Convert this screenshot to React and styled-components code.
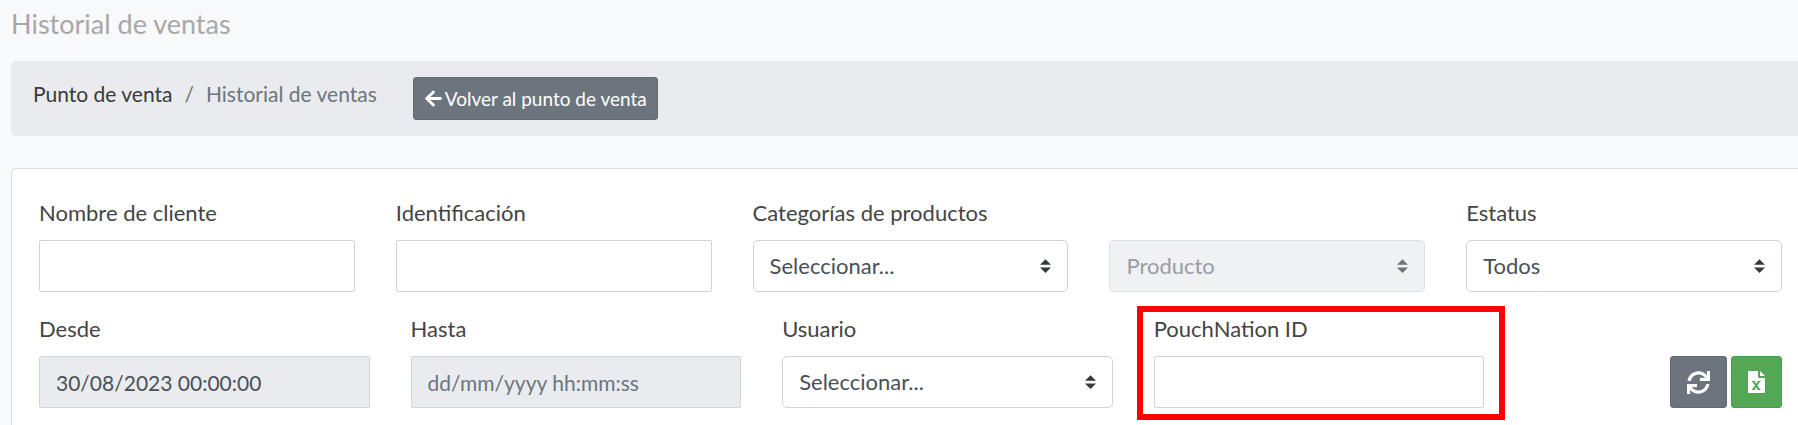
import React from 'react';
import styled, { createGlobalStyle, css } from 'styled-components';
import { FaArrowLeft } from 'react-icons/fa';

const GlobalStyle = createGlobalStyle`
  *, *::before, *::after { box-sizing: border-box; }
  body {
    margin: 0;
    background: #f8f9fb;
    color: #444;
    font-family: Lato, "Liberation Sans", sans-serif;
    font-size: 22px;
    line-height: 32px;
    overflow-x: hidden;
  }
`;

const Page = styled.main`
  padding: 8px 0 0 11px;
`;

const Title = styled.h1`
  margin: 0 0 21px;
  color: #a8a8a8;
  font-size: 27px;
  font-weight: 400;
  line-height: 32px;
`;

const Breadcrumb = styled.nav`
  display: flex;
  align-items: flex-start;
  gap: 36px;
  padding: 16px 22px;
  background: #eaebef;
  border-radius: 5px 0 0 5px;
`;

const Crumbs = styled.ol`
  display: flex;
  margin: 0;
  padding: 0;
  list-style: none;
  font-size: 21px;
  line-height: 34px;
`;

const Crumb = styled.li`
  color: #6c757d;

  & + &::before {
    content: "/";
    padding: 0 12px;
  }
`;

const CrumbLink = styled.a`
  color: #3a3a3a;
  text-decoration: none;
`;

const Button = styled.button`
  display: inline-flex;
  align-items: center;
  justify-content: center;
  gap: 2px;
  height: ${(p) => (p.$square ? '52px' : '43px')};
  padding: ${(p) => (p.$square ? '0 16px' : '0 10px')};
  border: 1px solid ${(p) => (p.$tone === 'success' ? '#4a9e4a' : '#636b73')};
  border-radius: 3px;
  background: ${(p) => (p.$tone === 'success' ? '#54a754' : '#6c757d')};
  color: #fff;
  font: inherit;
  font-size: 19px;
  cursor: pointer;
`;

const Card = styled.form`
  display: grid;
  gap: 21px;
  margin-top: 32px;
  padding: 28px 16px 27px 27px;
  background: #fff;
  border: 1px solid #dcdddf;
  border-right: 0;
  border-radius: 5px 0 0 5px;
`;

const Row = styled.div`
  display: grid;
  grid-template-columns: ${(p) => p.$columns};
  column-gap: 41px;
  align-items: end;
`;

const FieldBox = styled.div`
  position: relative;
  display: flex;
  flex-direction: column;
  gap: 11px;
  min-width: 0;
`;

const Highlight = styled.span`
  position: absolute;
  inset: -7px -21px -12px -17px;
  border: 6px solid #ff0000;
  pointer-events: none;
`;

const control = css`
  width: 100%;
  height: 52px;
  padding: 0 16px;
  border: 1px solid #ced4da;
  background: #fff;
  color: #495057;
  font: inherit;
`;

const TextInput = styled.input`
  ${control}
  border-radius: 2px;
  font-size: 21px;

  &:read-only { background: #eaebef; }
  &::placeholder { color: #6c757d; opacity: 1; }
`;

const SelectBox = styled.div`
  position: relative;
  opacity: ${(p) => (p.$disabled ? 0.7 : 1)};
`;

const SelectInput = styled.select`
  ${control}
  display: block;
  border-radius: 5px;
  appearance: none;

  &:disabled { background: #e9ecef; color: #6c757d; opacity: 1; }
`;

const Caret = styled.svg`
  position: absolute;
  top: 19px;
  right: 17px;
  width: 11px;
  height: 14px;
  fill: #343a40;
  pointer-events: none;
`;

const Actions = styled.div`
  display: flex;
  justify-content: flex-end;
  gap: 4px;
`;

function Select({ id, option, disabled, label }) {
  return (
    <SelectBox $disabled={disabled}>
      <SelectInput id={id} disabled={disabled} aria-label={label}>
        <option>{option}</option>
      </SelectInput>
      <Caret viewBox="0 0 4 5" aria-hidden="true">
        <path d="M2 0L0 2h4zm0 5L0 3h4z" />
      </Caret>
    </SelectBox>
  );
}

function Field({ id, label, highlighted, children }) {
  return (
    <FieldBox>
      {label && <label htmlFor={id}>{label}</label>}
      {children}
      {highlighted && <Highlight />}
    </FieldBox>
  );
}

function RefreshIcon() {
  return (
    <svg width="23" height="23" viewBox="0 0 512 512" fill="currentColor" aria-hidden="true">
      <path d="M440.65 12.57l4 82.77A247.16 247.16 0 0 0 255.83 8C134.73 8 33.91 94.92 12.29 209.82A12 12 0 0 0 24.09 224h49.05a12 12 0 0 0 11.67-9.26 175.91 175.91 0 0 1 317-56.94l-101.46-4.86a12 12 0 0 0-12.57 12v47.41a12 12 0 0 0 12 12H500a12 12 0 0 0 12-12V12a12 12 0 0 0-12-12h-47.37a12 12 0 0 0-11.98 12.57zM255.83 432a175.61 175.61 0 0 1-146-77.8l101.8 4.87a12 12 0 0 0 12.57-12v-47.4a12 12 0 0 0-12-12H12a12 12 0 0 0-12 12V500a12 12 0 0 0 12 12h47.35a12 12 0 0 0 12-12.6l-4.15-82.57A247.17 247.17 0 0 0 255.83 504c121.11 0 221.93-86.92 243.55-201.82a12 12 0 0 0-11.8-14.18h-49.05a12 12 0 0 0-11.67 9.26A175.86 175.86 0 0 1 255.83 432z" />
    </svg>
  );
}

function ExcelIcon() {
  return (
    <svg width="17" height="22" viewBox="0 0 17 22" aria-hidden="true">
      <path fill="currentColor" d="M1 0h9v6q0 1 1 1h6v14q0 1-1 1H1q-1 0-1-1V1q0-1 1-1zM12 0l5 5h-5z" />
      <path fill="none" stroke="#54a754" strokeWidth="2" d="M5.500 10.500l5.500 8M11 10.500l-5.500 8" />
      <path fill="none" stroke="#54a754" strokeWidth="1" d="M4 10.500h3M9.500 10.500h3M4 18.500h3M9.500 18.500h3" />
    </svg>
  );
}

export default function App() {
  return (
    <>
      <GlobalStyle />
      <Page>
        <Title>Historial de ventas</Title>
        <Breadcrumb aria-label="Ruta">
          <Crumbs>
            <Crumb><CrumbLink href="#punto-de-venta">Punto de venta</CrumbLink></Crumb>
            <Crumb aria-current="page">Historial de ventas</Crumb>
          </Crumbs>
          <Button type="button"><FaArrowLeft size={19} aria-hidden="true" />Volver al punto de venta</Button>
        </Breadcrumb>
        <Card>
          <Row $columns="repeat(5, minmax(0, 1fr))">
            <Field id="cliente" label="Nombre de cliente"><TextInput id="cliente" /></Field>
            <Field id="identificacion" label="Identificación"><TextInput id="identificacion" /></Field>
            <Field id="categoria" label="Categorías de productos"><Select id="categoria" option="Seleccionar..." /></Field>
            <Field id="producto"><Select id="producto" option="Producto" label="Producto" disabled /></Field>
            <Field id="estatus" label="Estatus"><Select id="estatus" option="Todos" /></Field>
          </Row>
          <Row $columns="repeat(4, minmax(0, 331fr)) minmax(0, 257fr)">
            <Field id="desde" label="Desde"><TextInput id="desde" defaultValue="30/08/2023 00:00:00" readOnly /></Field>
            <Field id="hasta" label="Hasta"><TextInput id="hasta" placeholder="dd/mm/yyyy hh:mm:ss" readOnly /></Field>
            <Field id="usuario" label="Usuario"><Select id="usuario" option="Seleccionar..." /></Field>
            <Field id="pouchnation" label="PouchNation ID" highlighted><TextInput id="pouchnation" /></Field>
            <Actions>
              <Button type="button" $square aria-label="Actualizar"><RefreshIcon /></Button>
              <Button type="button" $square $tone="success" aria-label="Exportar a Excel"><ExcelIcon /></Button>
            </Actions>
          </Row>
        </Card>
      </Page>
    </>
  );
}
